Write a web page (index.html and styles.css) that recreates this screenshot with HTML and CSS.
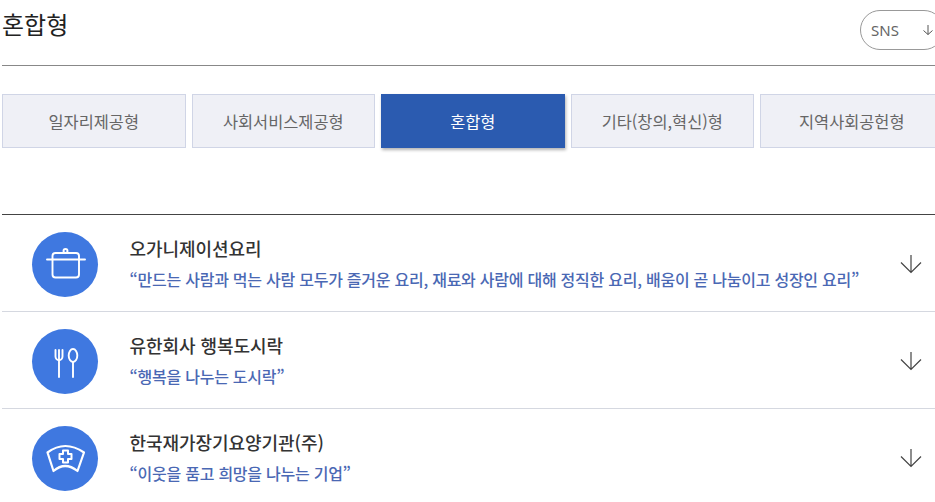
FILE: index.html
```html
<!DOCTYPE html>
<html lang="ko">
<head>
    <meta charset="UTF-8">
    <meta name="viewport" content="width=device-width, initial-scale=1.0">
    <title>혼합형</title>
    <link rel="stylesheet" href="styles.css">
</head>
<body>
    <div class="wrap">
        <header class="head">
            <h1>혼합형</h1>
            <button class="sns">
                <span>SNS</span>
                <svg width="12" height="12" viewBox="0 0 12 12"><path d="M6 1V10.5M1.500 6.500L6 10.500L10.500 6.500" fill="none" stroke="#555" stroke-width="1"/></svg>
            </button>
        </header>
        <nav class="tabs">
            <a class="tab">일자리제공형</a>
            <a class="tab">사회서비스제공형</a>
            <a class="tab active">혼합형</a>
            <a class="tab">기타(창의,혁신)형</a>
            <a class="tab">지역사회공헌형</a>
        </nav>
        <ul class="list">
            <li class="item">
                <span class="icon">
                    <svg width="46" height="46" viewBox="0 0 46 46" fill="none" stroke="#fff" stroke-width="1.9" stroke-linecap="round" stroke-linejoin="round">
                        <path d="M5 17.500H43"/>
                        <path d="M10.500 17.500V32.500a3 3 0 0 0 3 3H34a3 3 0 0 0 3-3V17.500"/>
                        <path d="M10.500 17.500V14a3 3 0 0 1 3-3H34a3 3 0 0 1 3 3v3.500"/>
                        <circle cx="23.500" cy="9" r="2"/>
                    </svg>
                </span>
                <div class="text">
                    <h2>오가니제이션요리</h2>
                    <p>“만드는 사람과 먹는 사람 모두가 즐거운 요리, 재료와 사람에 대해 정직한 요리, 배움이 곧 나눔이고 성장인 요리”</p>
                </div>
                <svg class="arrow" width="22" height="20" viewBox="0 0 22 20"><path d="M11 1V18.500M1 8.500L11 18.500L21 8.500" fill="none" stroke="#444" stroke-width="1.2"/></svg>
            </li>
            <li class="item">
                <span class="icon">
                    <svg width="46" height="46" viewBox="0 0 46 46" fill="none" stroke="#fff" stroke-width="1.9" stroke-linecap="round" stroke-linejoin="round">
                        <path d="M13.500 11V17.500a3.500 3.500 0 0 0 7 0V11"/>
                        <path d="M17 11V38"/>
                        <ellipse cx="31" cy="16.500" rx="4.300" ry="6.500"/>
                        <path d="M31 23V38"/>
                    </svg>
                </span>
                <div class="text">
                    <h2>유한회사 행복도시락</h2>
                    <p>“행복을 나누는 도시락”</p>
                </div>
                <svg class="arrow" width="22" height="20" viewBox="0 0 22 20"><path d="M11 1V18.500M1 8.500L11 18.500L21 8.500" fill="none" stroke="#444" stroke-width="1.2"/></svg>
            </li>
            <li class="item">
                <span class="icon">
                    <svg width="46" height="46" viewBox="0 0 46 46" fill="none" stroke="#fff" stroke-width="2.2" stroke-linecap="round" stroke-linejoin="round">
                        <path d="M5.500 16.500Q23 3.500 42 16.500L35.500 35Q23 25 11.500 35Z"/>
                        <path d="M21 14.500H26V18H29.500V23H26V26.500H21V23H17.500V18H21Z" stroke-width="2"/>
                    </svg>
                </span>
                <div class="text">
                    <h2>한국재가장기요양기관(주)</h2>
                    <p>“이웃을 품고 희망을 나누는 기업”</p>
                </div>
                <svg class="arrow" width="22" height="20" viewBox="0 0 22 20"><path d="M11 1V18.500M1 8.500L11 18.500L21 8.500" fill="none" stroke="#444" stroke-width="1.2"/></svg>
            </li>
        </ul>
    </div>
</body>
</html>
```

FILE: styles.css
```css
html, body {
    margin: 0;
    height: 502px;
    overflow: hidden;
    background-color: #fff;
}
body {
    font-family: "Noto Sans CJK KR", "Noto Sans", sans-serif;
    color: #222;
    padding-left: 2px;
}
.wrap {
    width: 942px;
}
.head {
    display: flex;
    justify-content: space-between;
    height: 65px;
    border-bottom: 1px solid #888;
}
.head h1 {
    margin: 6px 0 0;
    font-size: 24px;
    font-weight: 400;
    line-height: 36px;
}
.sns {
    display: flex;
    align-items: center;
    justify-content: space-between;
    box-sizing: border-box;
    width: 84px;
    height: 40px;
    margin-top: 10px;
    padding: 0 9px 0 10px;
    background: #fff;
    border: 1px solid #999;
    border-radius: 20px;
    font-family: "Noto Sans", sans-serif;
    font-size: 15px;
    color: #666;
}
.tabs {
    display: flex;
    gap: 6px;
    margin-top: 28px;
}
.tab {
    box-sizing: border-box;
    flex: 0 0 183.5px;
    height: 54px;
    display: flex;
    align-items: center;
    justify-content: center;
    background-color: #eff0f6;
    border: 1px solid #d0d5e6;
    font-size: 16.4px;
    color: #666;
}
.tab.active {
    background-color: #2b5bb0;
    border-color: #2b5bb0;
    color: #fff;
    box-shadow: 1px 2px 3px rgba(0, 0, 0, 0.3);
}
.list {
    list-style: none;
    margin: 66px 0 0;
    padding: 0;
    border-top: 1px solid #444;
}
.item {
    box-sizing: border-box;
    height: 97px;
    display: flex;
    align-items: flex-start;
    padding: 17px 0 0 30px;
    border-bottom: 1px solid #d5d8e0;
}
.icon {
    flex: none;
    width: 66px;
    height: 65px;
    display: flex;
    align-items: center;
    justify-content: center;
    border-radius: 50%;
    background-color: #3f78e0;
}
.text {
    flex: 1;
    margin: 3px 0 0 31.5px;
}
.text h2 {
    margin: 0;
    font-size: 18px;
    font-weight: 500;
    line-height: 26px;
    letter-spacing: -0.05px;
    color: #333;
}
.text p {
    margin: 7px 0 0;
    font-size: 16px;
    font-weight: 500;
    line-height: 22px;
    letter-spacing: -0.25px;
    color: #4a68b4;
}
.arrow {
    flex: none;
    margin: 22px 22px 0 0;
}
```
